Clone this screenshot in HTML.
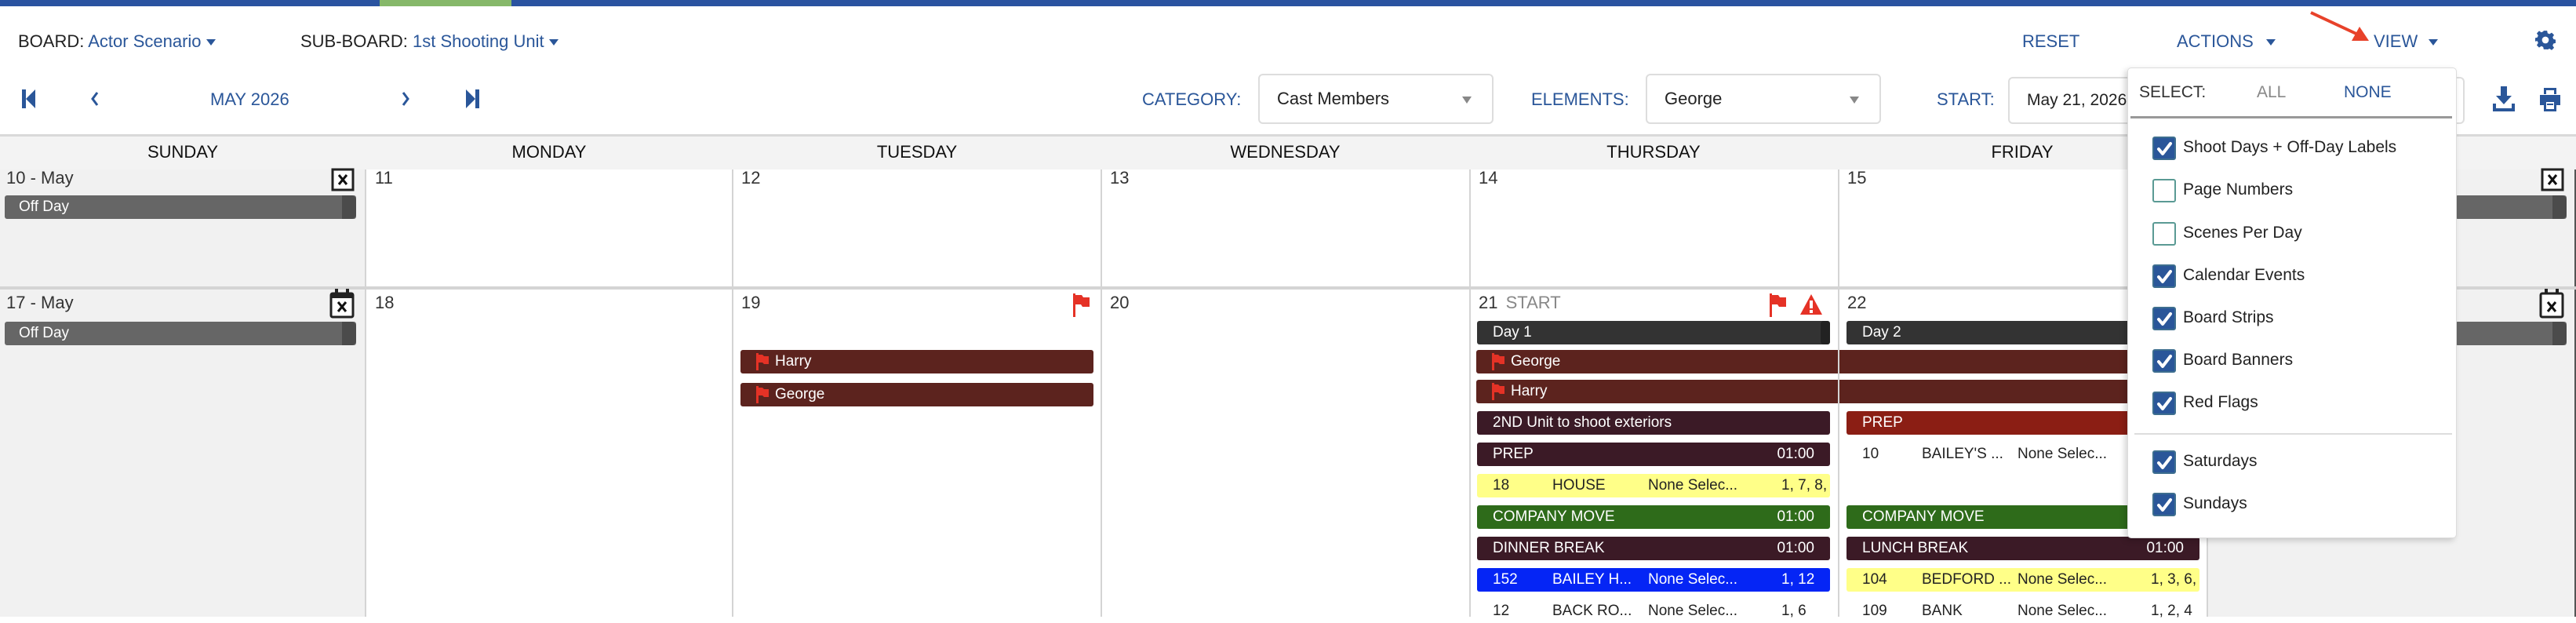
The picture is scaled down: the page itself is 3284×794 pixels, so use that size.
<!DOCTYPE html>
<html><head><meta charset="utf-8">
<style>
*{box-sizing:border-box;margin:0;padding:0}
body{width:3284px;height:786px;overflow:hidden;background:#fff;font-family:"Liberation Sans",Arial,sans-serif;position:relative;color:#222}
.a{position:absolute;white-space:nowrap}
.blue{color:#2a5699}
.t22{font-size:22px}
.bar{position:absolute;height:30px;border-radius:3px;color:#fff;font-size:19px;line-height:30px;padding-left:20px;white-space:nowrap;overflow:hidden}
.car{display:inline-block;width:0;height:0;border-left:6px solid transparent;border-right:6px solid transparent;border-top:8px solid #2a5699;vertical-align:middle;margin-left:10px}
.vl{position:absolute;top:216px;bottom:0;width:2px;background:#d4d4d4}
.hl{position:absolute;left:0;width:3284px;height:4px;background:#d4d4d4}
.date{position:absolute;font-size:22px;color:#333}
.off{position:absolute;height:30px;background:#666;border-radius:3px;color:#fff;font-size:19px;line-height:30px;padding-left:18px}
.off:after{content:"";position:absolute;right:0;top:0;width:18px;height:30px;background:#4b4b4b;border-radius:0 6px 6px 0}
.sel{position:absolute;height:64px;border:2px solid #ddd;border-radius:6px;font-size:22px;line-height:60px;padding-left:22px;color:#222;background:#fff}
.sel i{position:absolute;right:26px;top:27px;border-left:6px solid transparent;border-right:6px solid transparent;border-top:9px solid #888}
.cb{position:absolute;width:30px;height:30px;border-radius:3px}
.cb.on{background:#2a5699;border:2px solid #3d6e8f}
.cb.off2{background:#fff;border:2px solid #5a9a94}
.lbl{position:absolute;font-size:21px;color:#222}
.fl{display:inline-block;vertical-align:middle}
.sc{position:absolute;font-size:19px;color:#222;line-height:30px}
</style></head><body>
<!-- top bar -->
<div class="a" style="left:0;top:0;width:3284px;height:8px;background:#2a53a0"></div>
<div class="a" style="left:484px;top:0;width:168px;height:8px;background:#86b86a"></div>

<!-- header row 1 -->
<div class="a t22" style="left:23px;top:40px">BOARD: <span class="blue">Actor Scenario</span><span class="car" style="margin-left:6px"></span></div>
<div class="a t22" style="left:383px;top:40px">SUB-BOARD: <span class="blue">1st Shooting Unit</span><span class="car" style="margin-left:6px"></span></div>
<div class="a t22 blue" style="left:2578px;top:40px">RESET</div>
<div class="a t22 blue" style="left:2775px;top:40px">ACTIONS<span class="car" style="margin-left:16px"></span></div>
<div class="a t22 blue" style="left:3026px;top:40px">VIEW<span class="car" style="margin-left:14px"></span></div>
<svg class="a" style="left:3232px;top:38px" width="26" height="26" viewBox="0 0 24 24"><path fill="#2a5699" d="M10 1h4l.6 3 2.2 1 2.6-1.7 2.8 2.8L20.5 8.7l1 2.3 2.5.6v4l-2.5.6-1 2.3 1.7 2.6-2.8 2.8-2.6-1.7-2.2 1L14 23h-4l-.6-2.8-2.2-1-2.6 1.7-2.8-2.8 1.7-2.6-1-2.3L0 13.6v-4l2.5-.6 1-2.3L1.8 4.1 4.6 1.3l2.6 1.7 2.2-1z"/><circle cx="12" cy="12" r="4" fill="#fff"/></svg>
<!-- red arrow -->
<svg class="a" style="left:2940px;top:10px" width="90" height="50"><line x1="6" y1="6" x2="66" y2="34" stroke="#e8422a" stroke-width="4"/><polygon points="80,42 58,42 68,24" fill="#e8422a"/></svg>

<!-- header row 2 -->
<svg class="a" style="left:28px;top:113px" width="18" height="26"><rect x="0" y="1" width="5" height="24" fill="#2a5699"/><polygon points="17,1 5,13 17,25" fill="#2a5699"/></svg>
<svg class="a" style="left:115px;top:116px" width="12" height="20"><polyline points="9,2 3,10 9,18" stroke="#2a5699" stroke-width="3" fill="none"/></svg>
<div class="a t22 blue" style="left:268px;top:114px">MAY 2026</div>
<svg class="a" style="left:511px;top:116px" width="12" height="20"><polyline points="3,2 9,10 3,18" stroke="#2a5699" stroke-width="3" fill="none"/></svg>
<svg class="a" style="left:594px;top:113px" width="18" height="26"><polygon points="0,1 12,13 0,25" fill="#2a5699"/><rect x="12" y="1" width="5" height="24" fill="#2a5699"/></svg>
<div class="a t22 blue" style="left:1456px;top:114px">CATEGORY:</div>
<div class="sel" style="left:1604px;top:94px;width:300px">Cast Members<i></i></div>
<div class="a t22 blue" style="left:1952px;top:114px">ELEMENTS:</div>
<div class="sel" style="left:2098px;top:94px;width:300px">George<i></i></div>
<div class="a t22 blue" style="left:2469px;top:114px">START:</div>
<div class="sel" style="left:2560px;top:98px;width:582px;height:60px;line-height:56px;font-size:21px">May 21, 2026</div>
<svg class="a" style="left:3178px;top:110px" width="28" height="32" viewBox="0 0 28 32"><path fill="#2a5699" d="M10 0h8v12h6L14 23 4 12h6z"/><path fill="#2a5699" d="M0 22h4v6h20v-6h4v10H0z"/></svg>
<svg class="a" style="left:3236px;top:112px" width="30" height="30" viewBox="0 0 30 30"><path fill="#2a5699" d="M7 0h16v8h-3V3H10v5H7z M2 9h26v13h-5v8H7v-8H2z"/><rect x="10" y="18" width="10" height="9" fill="#fff"/><rect x="11" y="20" width="8" height="2" fill="#2a5699"/></svg>

<!-- day header -->
<div class="a" style="left:0;top:171px;width:3284px;height:3px;background:#d9d9d9"></div>
<div class="a" style="left:0;top:174px;width:3284px;height:42px;background:#f3f3f3"></div>
<div class="a t22" style="left:0;top:181px;width:3284px;display:flex;color:#111">
<div style="width:466px;text-align:center">SUNDAY</div><div style="width:468px;text-align:center">MONDAY</div><div style="width:470px;text-align:center">TUESDAY</div><div style="width:469px;text-align:center">WEDNESDAY</div><div style="width:470px;text-align:center">THURSDAY</div><div style="width:470px;text-align:center">FRIDAY</div><div style="width:471px;text-align:center">SATURDAY</div></div>

<!-- grey weekend cols -->
<div class="a" style="left:0;top:216px;width:465px;height:570px;background:#f1f1f1"></div>
<div class="a" style="left:2814px;top:216px;width:470px;height:570px;background:#f1f1f1"></div>
<div class="a" style="left:3282px;top:216px;width:2px;height:570px;background:#555"></div>
<div class="vl" style="left:465px"></div>
<div class="vl" style="left:933px"></div>
<div class="vl" style="left:1403px"></div>
<div class="vl" style="left:1873px"></div>
<div class="vl" style="left:2343px"></div>
<div class="vl" style="left:2813px"></div>
<div class="hl" style="top:365px"></div>

<!-- week 1 -->
<div class="date" style="left:8px;top:214px">10 - May</div>
<svg class="a" style="left:422px;top:214px" width="30" height="30"><rect x="2" y="2" width="26" height="26" fill="#fff" stroke="#222" stroke-width="3"/><path d="M10 9l10 12M20 9L10 21" stroke="#111" stroke-width="3"/></svg>
<div class="off" style="left:6px;top:249px;width:448px">Off Day</div>
<div class="date" style="left:478px;top:214px">11</div>
<div class="date" style="left:945px;top:214px">12</div>
<div class="date" style="left:1415px;top:214px">13</div>
<div class="date" style="left:1885px;top:214px">14</div>
<div class="date" style="left:2355px;top:214px">15</div>
<svg class="a" style="left:3239px;top:214px" width="30" height="30"><rect x="2" y="2" width="26" height="26" fill="#fff" stroke="#222" stroke-width="3"/><path d="M10 9l10 12M20 9L10 21" stroke="#111" stroke-width="3"/></svg>
<div class="off" style="left:3130px;top:249px;width:142px;padding:0"></div>

<!-- week 2 -->
<div class="date" style="left:8px;top:373px">17 - May</div>
<svg class="a" style="left:420px;top:368px" width="32" height="38"><rect x="7" y="0" width="4" height="8" fill="#222"/><rect x="21" y="0" width="4" height="8" fill="#222"/><rect x="2" y="6" width="28" height="30" rx="2" fill="#fff" stroke="#222" stroke-width="3"/><rect x="2" y="6" width="28" height="6" fill="#222"/><path d="M11 17l10 12M21 17L11 29" stroke="#111" stroke-width="3"/></svg>
<div class="off" style="left:6px;top:410px;width:448px">Off Day</div>
<div class="date" style="left:478px;top:373px">18</div>
<div class="date" style="left:945px;top:373px">19</div>
<svg class="a" style="left:1368px;top:374px" width="22" height="30"><rect x="0" y="0" width="3" height="30" fill="#e53226"/><path d="M3 2h8l2 3h8v12h-9l-2-3H3z" fill="#e53226"/></svg>
<div class="bar" style="left:944px;top:446px;width:450px;background:#5c231e"><svg class="fl" width="16" height="22" style="margin-right:8px"><rect x="0" y="0" width="3" height="22" fill="#e53226"/><path d="M3 2h5l2 2h6v10h-6l-2-2H3z" fill="#e53226"/></svg>Harry</div>
<div class="bar" style="left:944px;top:488px;width:450px;background:#5c231e"><svg class="fl" width="16" height="22" style="margin-right:8px"><rect x="0" y="0" width="3" height="22" fill="#e53226"/><path d="M3 2h5l2 2h6v10h-6l-2-2H3z" fill="#e53226"/></svg>George</div>
<div class="date" style="left:1415px;top:373px">20</div>

<!-- Thursday -->
<div class="date" style="left:1885px;top:373px">21 <span style="color:#888;margin-left:4px">START</span></div>
<svg class="a" style="left:2256px;top:374px" width="22" height="30"><rect x="0" y="0" width="3" height="30" fill="#e53226"/><path d="M3 2h8l2 3h8v12h-9l-2-3H3z" fill="#e53226"/></svg>
<svg class="a" style="left:2294px;top:374px" width="30" height="28"><path d="M15 1L29 27H1z" fill="#e53226"/><rect x="13" y="9" width="4" height="10" fill="#fff"/><rect x="13" y="21" width="4" height="4" fill="#fff"/></svg>
<div class="bar" style="left:1883px;top:409px;width:450px;background:#333">Day 1<span style="position:absolute;right:0;top:0;width:12px;height:30px;background:#222;border-radius:4px"></span></div>
<div class="bar" style="left:1882px;top:446px;width:922px;background:#5c231e"><svg class="fl" width="16" height="22" style="margin-right:8px"><rect x="0" y="0" width="3" height="22" fill="#e53226"/><path d="M3 2h5l2 2h6v10h-6l-2-2H3z" fill="#e53226"/></svg>George</div>
<div class="bar" style="left:1882px;top:484px;width:922px;background:#5c231e"><svg class="fl" width="16" height="22" style="margin-right:8px"><rect x="0" y="0" width="3" height="22" fill="#e53226"/><path d="M3 2h5l2 2h6v10h-6l-2-2H3z" fill="#e53226"/></svg>Harry</div>
<div class="a" style="left:2343px;top:446px;width:2px;height:69px;background:#d4d4d4"></div>
<div class="bar" style="left:1883px;top:524px;width:450px;background:#3b1a26">2ND Unit to shoot exteriors</div>
<div class="bar" style="left:1883px;top:564px;width:450px;background:#3b1a26">PREP<span style="position:absolute;right:20px">01:00</span></div>
<div class="bar" style="left:1883px;top:604px;width:450px;background:#ffff88;color:#222;padding:0"><span class="sc" style="left:20px">18</span><span class="sc" style="left:96px">HOUSE</span><span class="sc" style="left:218px">None Selec...</span><span class="sc" style="left:388px">1, 7, 8, 1</span></div>
<div class="bar" style="left:1883px;top:644px;width:450px;background:#2e6b1a">COMPANY MOVE<span style="position:absolute;right:20px">01:00</span></div>
<div class="bar" style="left:1883px;top:684px;width:450px;background:#3b1a26">DINNER BREAK<span style="position:absolute;right:20px">01:00</span></div>
<div class="bar" style="left:1883px;top:724px;width:450px;background:#0525f5;padding:0"><span class="sc" style="left:20px;color:#fff">152</span><span class="sc" style="left:96px;color:#fff">BAILEY H...</span><span class="sc" style="left:218px;color:#fff">None Selec...</span><span class="sc" style="left:388px;color:#fff">1, 12</span></div>
<div class="sc" style="left:1903px;top:764px">12</div><div class="sc" style="left:1979px;top:764px">BACK RO...</div><div class="sc" style="left:2101px;top:764px">None Selec...</div><div class="sc" style="left:2271px;top:764px">1, 6</div>

<!-- Friday -->
<div class="date" style="left:2355px;top:373px">22</div>
<div class="bar" style="left:2354px;top:409px;width:450px;background:#333">Day 2</div>
<div class="bar" style="left:2354px;top:524px;width:450px;background:#8b1e14">PREP</div>
<div class="sc" style="left:2374px;top:564px">10</div><div class="sc" style="left:2450px;top:564px">BAILEY'S ...</div><div class="sc" style="left:2572px;top:564px">None Selec...</div><div class="sc" style="left:2742px;top:564px">1</div>
<div class="bar" style="left:2354px;top:644px;width:450px;background:#2e6b1a">COMPANY MOVE</div>
<div class="sc" style="left:2374px;top:684px">109</div><div class="sc" style="left:2450px;top:684px">BANK</div><div class="sc" style="left:2572px;top:684px">None Selec...</div><div class="sc" style="left:2742px;top:684px">1</div>
<div class="bar" style="left:2354px;top:684px;width:450px;background:#3b1a26;top:684px;display:none"></div>
<div class="bar" style="left:2354px;top:684px;width:450px;background:#3b1a26">LUNCH BREAK<span style="position:absolute;right:20px">01:00</span></div>
<div class="bar" style="left:2354px;top:724px;width:450px;background:#ffff88;color:#222;padding:0"><span class="sc" style="left:20px">104</span><span class="sc" style="left:96px">BEDFORD ...</span><span class="sc" style="left:218px">None Selec...</span><span class="sc" style="left:388px">1, 3, 6, 7</span></div>
<div class="sc" style="left:2374px;top:764px">109</div><div class="sc" style="left:2450px;top:764px">BANK</div><div class="sc" style="left:2572px;top:764px">None Selec...</div><div class="sc" style="left:2742px;top:764px">1, 2, 4</div>

<!-- week 2 saturday -->
<svg class="a" style="left:3237px;top:368px" width="32" height="38"><rect x="7" y="0" width="4" height="8" fill="#222"/><rect x="21" y="0" width="4" height="8" fill="#222"/><rect x="2" y="6" width="28" height="30" rx="2" fill="#fff" stroke="#222" stroke-width="3"/><path d="M11 17l10 12M21 17L11 29" stroke="#111" stroke-width="3"/></svg>
<div class="off" style="left:3130px;top:410px;width:142px;padding:0"></div>

<!-- dropdown -->
<div class="a" style="left:2712px;top:86px;width:420px;height:600px;background:#fff;border:1px solid #ddd;border-radius:5px;box-shadow:-3px 3px 8px rgba(0,0,0,0.18)"></div>
<div class="lbl" style="left:2727px;top:106px;color:#333">SELECT:</div>
<div class="lbl" style="left:2877px;top:106px;color:#888">ALL</div>
<div class="lbl" style="left:2988px;top:106px;color:#2a5699">NONE</div>
<div class="a" style="left:2716px;top:148px;width:410px;height:3px;background:#999"></div>
<div class="a" style="left:2721px;top:552px;width:405px;height:2px;background:#ddd"></div>

<div class="cb on" style="left:2744px;top:174px"></div><div class="lbl" style="left:2783px;top:176px">Shoot Days + Off-Day Labels</div>
<div class="cb off2" style="left:2744px;top:228px"></div><div class="lbl" style="left:2783px;top:230px">Page Numbers</div>
<div class="cb off2" style="left:2744px;top:283px"></div><div class="lbl" style="left:2783px;top:285px">Scenes Per Day</div>
<div class="cb on" style="left:2744px;top:337px"></div><div class="lbl" style="left:2783px;top:339px">Calendar Events</div>
<div class="cb on" style="left:2744px;top:391px"></div><div class="lbl" style="left:2783px;top:393px">Board Strips</div>
<div class="cb on" style="left:2744px;top:445px"></div><div class="lbl" style="left:2783px;top:447px">Board Banners</div>
<div class="cb on" style="left:2744px;top:499px"></div><div class="lbl" style="left:2783px;top:501px">Red Flags</div>
<div class="cb on" style="left:2744px;top:574px"></div><div class="lbl" style="left:2783px;top:576px">Saturdays</div>
<div class="cb on" style="left:2744px;top:628px"></div><div class="lbl" style="left:2783px;top:630px">Sundays</div>
<svg class="a" style="left:2744px;top:174px" width="30" height="490">
<g fill="none" stroke="#fff" stroke-width="4" stroke-linecap="round" stroke-linejoin="round">
<polyline points="8,16 13,22 23,9"/>
<polyline points="8,179 13,185 23,172"/>
<polyline points="8,233 13,239 23,226"/>
<polyline points="8,287 13,293 23,280"/>
<polyline points="8,341 13,347 23,334"/>
<polyline points="8,416 13,422 23,409"/>
<polyline points="8,470 13,476 23,463"/>
</g></svg>
</body></html>
